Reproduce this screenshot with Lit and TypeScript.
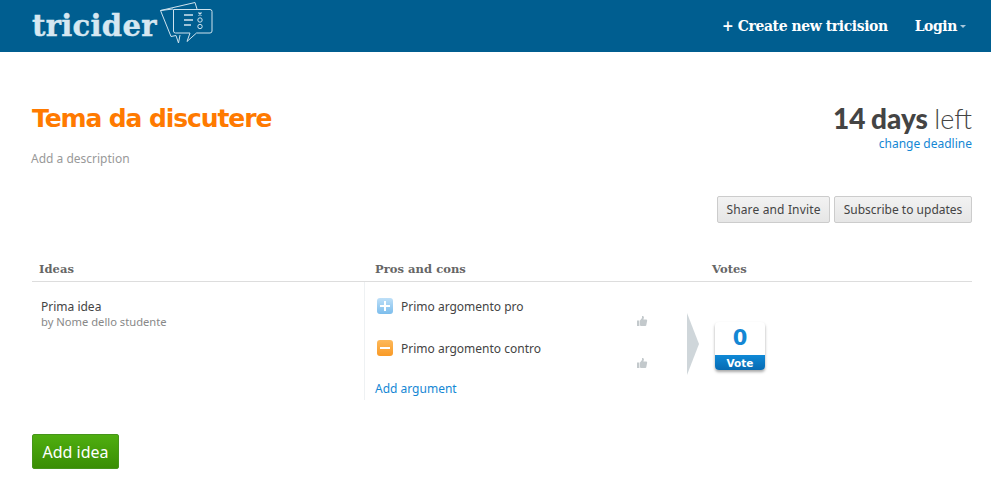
import { LitElement, html, css, svg } from "lit";
import { customElement } from "lit/decorators.js";

const thumb = svg`<svg class="thumb" width="12" height="12" viewBox="0 0 12 12"><path fill="#c3c9cc" d="M1 5.5h2.4V11H1zM4 5.5 6 3V1h1.2L8 2.2 7.4 4.6h3.2l.6.8-1 5-.8.6H5L4 10.4z"/></svg>`;

@customElement("app-root")
export class AppRoot extends LitElement {
  static styles = css`
    :host { display: block; width: 991px; height: 503px; overflow: hidden; background: #fff; font-family: "Noto Sans", sans-serif; font-size: 12px; color: #444; }
    .top { height: 52px; background: #005e90; display: flex; align-items: center; justify-content: space-between; padding: 0 25px 0 32px; }
    .logo { display: flex; align-items: flex-start; height: 52px; }
    .word { font-family: "DejaVu Serif", serif; font-weight: 700; font-size: 29px; letter-spacing: .3px; color: #d6e7f1; -webkit-text-stroke: .4px #d6e7f1; line-height: 52px; width: 128px; }
    .bubble { margin-top: 2px; }
    nav { display: flex; align-items: center; gap: 27px; margin-bottom: 1px; font-family: "DejaVu Serif Condensed", "DejaVu Serif", serif; font-weight: 700; font-size: 15.5px; letter-spacing: -.4px; color: #fff; }
    .login { display: flex; align-items: center; gap: 3px; }
    .caret { width: 0; height: 0; border: 3px solid transparent; border-top: 3px solid #a9c6da; margin-top: 4px; }
    main { padding: 0 19px 0 32px; }
    .head { display: flex; justify-content: space-between; align-items: flex-start; padding-top: 50px; height: 94px; }
    h1 { margin: 0; font-size: 25px; line-height: 34px; font-weight: 700; color: #ff7a00; font-family: "DejaVu Sans", sans-serif; letter-spacing: -1.1px; }
    .desc { margin-top: 15px; margin-left: -1px; color: #999; line-height: 16px; }
    .left { text-align: right; }
    .days { font-family: "Lato", sans-serif; font-size: 27px; line-height: 32px; color: #444; font-weight: 300; }
    .days b { font-weight: 900; font-size: 28px; word-spacing: -1px; margin-right: -1px; }
    a { color: #1487d4; text-decoration: none; }
    .chg { display: block; line-height: 16px; margin-top: 1px; }
    .actions { display: flex; justify-content: flex-end; gap: 4px; }
    .btn { height: 27px; box-sizing: border-box; border: 1px solid #ccc; border-radius: 2px; background: linear-gradient(#f2f2f2, #e6e6e6); text-align: center; line-height: 25px; color: #444; }
    .share { width: 113px; letter-spacing: .15px; }
    .sub { width: 138px; }
    .grid { display: grid; grid-template-columns: 332px 340px 1fr; margin-top: 32px; }
    .th { height: 27px; border-bottom: 1px solid #ddd; padding-left: 7px; font-family: "DejaVu Serif", serif; font-weight: 700; font-size: 11.5px; letter-spacing: .05px; line-height: 28px; color: #666; box-sizing: border-box; }
    .th.pros { padding-left: 11px; } .th.vt { padding-left: 8px; }
    .idea { padding: 17px 0 0 9px; line-height: 15px; color: #444; }
    .by { color: #888; font-size: 11.2px; }
    .args { border-left: 1px solid #eef1f3; height: 118px; padding: 15px 0 0 10px; box-sizing: border-box; }
    .arg { display: flex; align-items: center; height: 18px; gap: 8px; width: 271px; position: relative; margin-left: 2px; }
    .arg + .arg { margin-top: 24px; }
    .ic { width: 16px; height: 16px; border-radius: 3px; flex: none; display: flex; align-items: center; justify-content: center; }
    .plus { background: linear-gradient(#bfe0f8, #7cbdec); }
    .minus { background: linear-gradient(#fdb95b, #f99a26); }
    .thumbs { position: absolute; right: 0; top: 18px; line-height: 0; }
    .thumb { display: block; }
    .add { display: block; margin-top: 24px; line-height: 16px; }
    .votes { display: flex; align-items: flex-start; padding-top: 31px; margin-left: -17px; }
    .tri { width: 0; height: 0; border-left: 12px solid #cfd6da; border-top: 31px solid transparent; border-bottom: 31px solid transparent; }
    .vote { margin: 9px 0 0 16px; width: 50px; height: 48px; border-radius: 4px; box-shadow: 0 2px 3px rgba(0,0,0,.35); overflow: hidden; text-align: center; display: flex; flex-direction: column; }
    .n { flex: 1; font-family: "DejaVu Sans", sans-serif; font-weight: 700; font-size: 21px; line-height: 33px; color: #1487d4; }
    .cta { height: 17px; background: linear-gradient(#0f89d6, #0668b0); color: #fff; font-weight: 700; font-size: 10.5px; line-height: 16px; font-family: "DejaVu Sans", sans-serif; }
    .addidea { box-sizing: border-box; width: 87px; height: 35px; margin-top: 34px; background: linear-gradient(#4fae10, #3a8e04); border: 1px solid #46951a; border-radius: 2px; color: #fff; font-size: 16px; line-height: 34px; text-align: center; }
  `;
  render() {
    return html`
      <div class="top">
        <div class="logo">
          <span class="word">tricider</span>
          <svg class="bubble" width="54" height="43" viewBox="0 0 54 43" fill="none" stroke="#cfe3ee" stroke-width="1">
            <path d="M13 7 .5 8.500 11 34.500l5-1 2.500 7.500 1.500-8"/>
            <path d="M.5 8.500 35 .5l2 6.500"/>
            <path d="M13.500 7.500H50q2 0 2 2V29q0 2-2 2H36.500L27 39.500l3-8.500H15.500q-2 0-2-2z"/>
            <path d="M24 13h9M24 18h9M24 23h7" stroke-width="1.400"/>
            <path d="m38.500 10.500 3 3m0-3-3 3" stroke-width="1.200"/>
            <circle cx="40" cy="18" r="2.200"/><circle cx="40" cy="24.500" r="2.200"/>
          </svg>
        </div>
        <nav><span>+ Create new tricision</span><span class="login">Login<i class="caret"></i></span></nav>
      </div>
      <main>
        <div class="head">
          <div><h1>Tema da discutere</h1><div class="desc">Add a description</div></div>
          <div class="left"><div class="days"><b>14 days</b> left</div><a class="chg">change deadline</a></div>
        </div>
        <div class="actions"><div class="btn share">Share and Invite</div><div class="btn sub">Subscribe to updates</div></div>
        <div class="grid">
          <div class="th">Ideas</div><div class="th pros">Pros and cons</div><div class="th vt">Votes</div>
          <div class="idea"><div>Prima idea</div><div class="by">by Nome dello studente</div></div>
          <div class="args">
            <div class="arg"><span class="ic plus"><svg width="10" height="10" viewBox="0 0 10 10"><path fill="#fff" d="M4 0h2v4h4v2H6v4H4V6H0V4h4z"/></svg></span>Primo argomento pro<span class="thumbs">${thumb}</span></div>
            <div class="arg"><span class="ic minus"><svg width="10" height="10" viewBox="0 0 10 10"><path fill="#fff" d="M0 4h10v2H0z"/></svg></span>Primo argomento contro<span class="thumbs">${thumb}</span></div>
            <a class="add">Add argument</a>
          </div>
          <div class="votes"><div class="tri"></div><div class="vote"><div class="n">0</div><div class="cta">Vote</div></div></div>
        </div>
        <div class="addidea">Add idea</div>
      </main>`;
  }
}
